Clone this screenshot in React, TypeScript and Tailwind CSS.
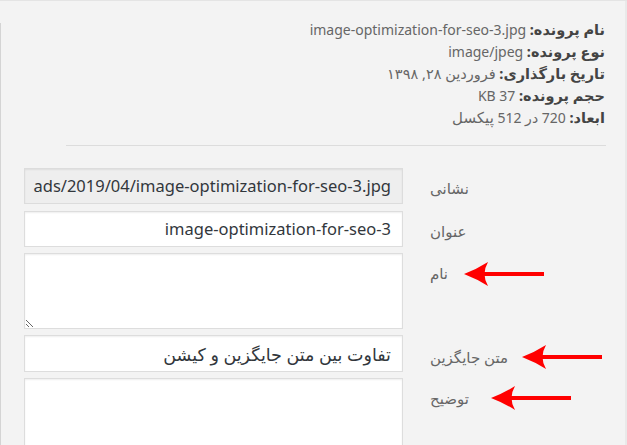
import React from "react";

function Arrow({ className }: { className: string }) {
  return (
    <svg className={className} width="80" height="24" viewBox="0 0 80 24">
      <path d="M0 12 Q13 7 24 0 Q17 12 24 24 Q13 17 0 12 Z" fill="#ff0000" />
      <rect x="16" y="10" width="64" height="4" fill="#ff0000" />
    </svg>
  );
}

function Row({
  label,
  children,
  labelPt = "pt-[11px]",
  mb = "mb-[6px]",
}: {
  label: string;
  children: React.ReactNode;
  labelPt?: string;
  mb?: string;
}) {
  return (
    <div dir="rtl" className={`flex ${mb}`}>
      <div className={`w-[222px] shrink-0 text-left pl-[27px] text-[15px] leading-[18px] text-[#666] ${labelPt}`}>
        {label}
      </div>
      <div className="min-w-0 flex-1 pl-[23px]">{children}</div>
    </div>
  );
}

function Info({ children }: { children: React.ReactNode }) {
  return <div className="h-[22px] whitespace-nowrap leading-[22px]">{children}</div>;
}

export default function App() {
  return (
    <div className="relative h-[445px] w-[627px] overflow-hidden bg-[#f3f3f3] border-t border-[#e4e4e4] font-['Noto_Sans','DejaVu_Sans',sans-serif]">
      <div className="flex h-full">
        <div className="mt-[22px] w-px shrink-0 bg-[#d4d4d4]" />
        <div dir="rtl" className="min-w-0 flex-1 pt-[17px]">
          <div className="pr-[20px] text-right text-[14px] text-[#666]">
            <Info>
              <span className="font-bold text-[14.5px] text-[#444]">نام پرونده:</span> image-optimization-for-seo-3.jpg
            </Info>
            <Info>
              <span className="font-bold text-[14.5px] text-[#444]">نوع پرونده:</span> image/jpeg
            </Info>
            <Info>
              <span className="font-bold text-[14.5px] text-[#444]">تاریخ بارگذاری:</span>{" "}
              <span className="text-[14.5px]">فروردین ۲۸, ۱۳۹۸</span>
            </Info>
            <Info>
              <span className="font-bold text-[14.5px] text-[#444]">حجم پرونده:</span> 37 KB
            </Info>
            <Info>
              <span className="font-bold text-[14.5px] text-[#444]">ابعاد:</span> 720 در 512{" "}
              <span className="text-[15px]">پیکسل</span>
            </Info>
          </div>

          <div className="mt-[17px] mr-[19px] ml-[65px] h-px bg-[#dcdcdc]" />

          <div className="mt-[22px]">
            <Row label="نشانی" mb="mb-[7px]">
              <div
                dir="rtl"
                className="flex h-[36px] items-center overflow-hidden border border-[#dcdcdc] bg-[#eeeeee] px-[11px] text-[16.5px] text-[#32373c] shadow-[inset_0_1px_2px_rgba(0,0,0,0.07)]"
              >
                <span dir="ltr" className="shrink-0 whitespace-nowrap">
                  ads/2019/04/image-optimization-for-seo-3.jpg
                </span>
              </div>
            </Row>
            <Row label="عنوان">
              <div
                dir="rtl"
                className="flex h-[36px] items-center overflow-hidden border border-[#dddddd] bg-white px-[11px] text-[16.5px] text-[#32373c] shadow-[inset_0_1px_2px_rgba(0,0,0,0.07)]"
              >
                <span dir="ltr" className="shrink-0 whitespace-nowrap">
                  image-optimization-for-seo-3
                </span>
              </div>
            </Row>
            <Row label="نام">
              <textarea
                dir="rtl"
                className="block h-[76px] w-full resize-y border border-[#dddddd] bg-white shadow-[inset_0_1px_2px_rgba(0,0,0,0.07)] outline-none"
              />
            </Row>
            <Row label="متن جایگزین" labelPt="pt-[13px]">
              <div
                dir="rtl"
                className="flex h-[37px] items-center overflow-hidden border border-[#dddddd] bg-white px-[11px] text-[17.5px] leading-[24px] text-[#32373c] shadow-[inset_0_1px_2px_rgba(0,0,0,0.07)]"
              >
                <span className="shrink-0 whitespace-nowrap">تفاوت بین متن جایگزین و کیشن</span>
              </div>
            </Row>
            <Row label="توضیح">
              <textarea
                dir="rtl"
                className="block h-[110px] w-full resize-y border border-[#dddddd] bg-white shadow-[inset_0_1px_2px_rgba(0,0,0,0.07)] outline-none"
              />
            </Row>
          </div>
        </div>
        <div className="w-[2px] shrink-0 bg-[#e9e9e9]" />
      </div>

      <Arrow className="absolute left-[464px] top-[261px]" />
      <Arrow className="absolute left-[522px] top-[344px]" />
      <Arrow className="absolute left-[491px] top-[385px]" />
    </div>
  );
}
